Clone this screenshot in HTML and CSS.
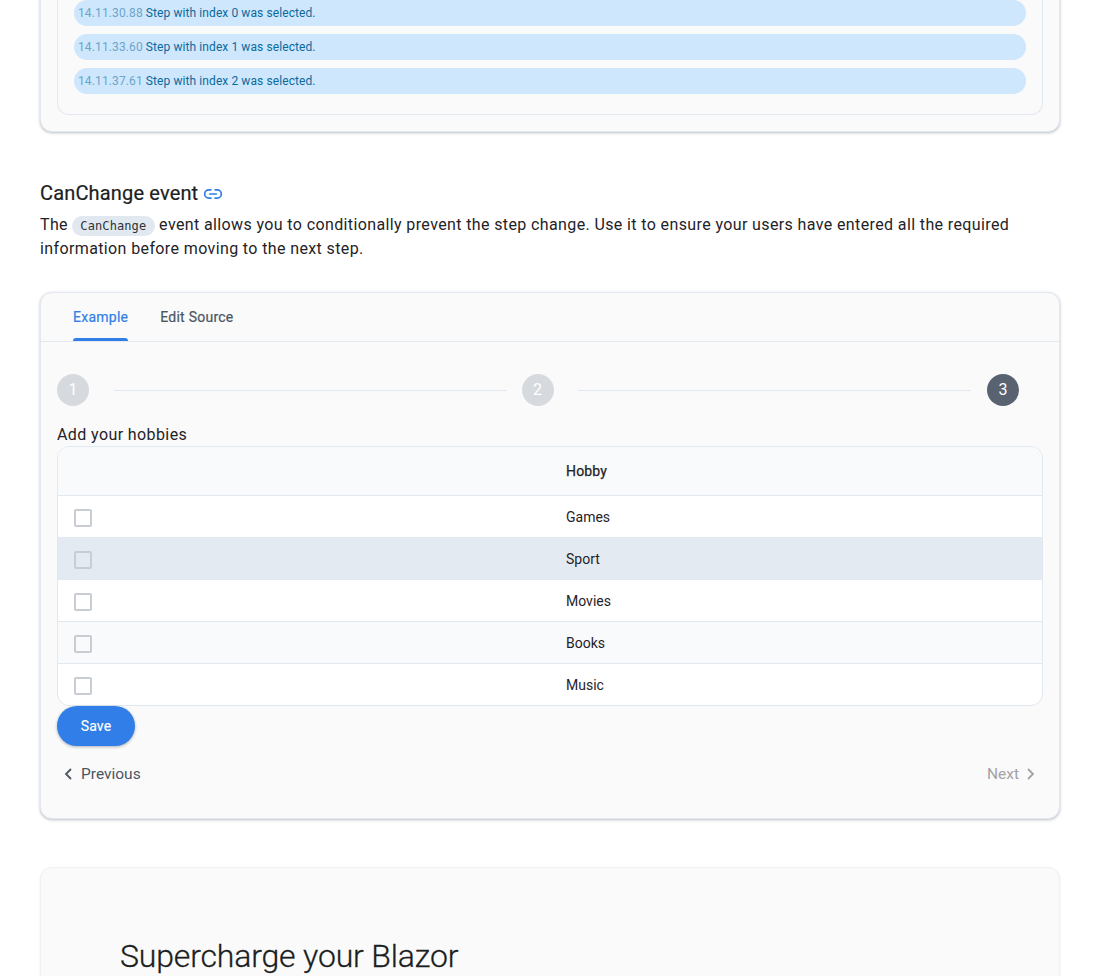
FILE: index.html
```html
<!DOCTYPE html>
<html lang="en">
<head>
<meta charset="utf-8">
<title>CanChange event</title>
<link rel="stylesheet" href="styles.css">
</head>
<body>
<main class="page">
  <section class="card log-card">
    <div class="log-panel">
      <div class="log-row"><span class="log-time">14.11.30.88</span> Step with index 0 was selected.</div>
      <div class="log-row"><span class="log-time">14.11.33.60</span> Step with index 1 was selected.</div>
      <div class="log-row"><span class="log-time">14.11.37.61</span> Step with index 2 was selected.</div>
    </div>
  </section>

  <h2 class="heading">CanChange event
    <svg class="link-icon" viewBox="0 0 24 24" width="20" height="20" fill="none" stroke="currentColor" stroke-width="2" stroke-linecap="round"><path d="M9.5 7H7a5 5 0 0 0 0 10h2.500M14.500 7H17a5 5 0 0 1 0 10h-2.500M8 12h8"/></svg>
  </h2>
  <p class="lead">The <code class="pill">CanChange</code> event allows you to conditionally prevent the step change. Use it to ensure your users have entered all the required information before moving to the next step.</p>

  <section class="card example-card">
    <div class="tabs">
      <div class="tab tab-active">Example</div>
      <div class="tab">Edit Source</div>
    </div>
    <div class="example-body">
      <div class="steps">
        <div class="step"><span class="step-dot">1</span><span class="step-line"></span></div>
        <div class="step"><span class="step-dot">2</span><span class="step-line"></span></div>
        <div class="step step-last"><span class="step-dot step-dot-active">3</span></div>
      </div>
      <div class="step-title">Add your hobbies</div>
      <div class="table">
        <div class="tr th"><div class="td"></div><div class="td">Hobby</div></div>
        <div class="tr"><div class="td"><span class="check"></span></div><div class="td">Games</div></div>
        <div class="tr tr-selected"><div class="td"><span class="check"></span></div><div class="td">Sport</div></div>
        <div class="tr"><div class="td"><span class="check"></span></div><div class="td">Movies</div></div>
        <div class="tr tr-striped"><div class="td"><span class="check"></span></div><div class="td">Books</div></div>
        <div class="tr"><div class="td"><span class="check"></span></div><div class="td">Music</div></div>
      </div>
      <button class="save" type="button">Save</button>
      <div class="nav">
        <div class="nav-btn">
          <svg class="chev" viewBox="0 0 10 14" width="10" height="14" fill="none" stroke="currentColor" stroke-width="1.800"><path d="M8 2 3 7l5 5"/></svg>
          Previous
        </div>
        <div class="nav-btn nav-disabled">
          Next
          <svg class="chev" viewBox="0 0 10 14" width="10" height="14" fill="none" stroke="currentColor" stroke-width="1.800"><path d="m2 2 5 5-5 5"/></svg>
        </div>
      </div>
    </div>
  </section>

  <section class="card promo-card">
    <h1 class="promo-title">Supercharge your Blazor</h1>
  </section>
</main>
</body>
</html>
```

FILE: styles.css
```css
* { box-sizing: border-box; }
html, body { margin: 0; height: 976px; overflow: hidden; background: #fff; }
body { font-family: Roboto, "Liberation Sans", sans-serif; color: #1f2328; }
.page { padding: 0 39px 0 40px; margin-top: -25px; }
.card {
  background: #fafafa;
  border-radius: 12px;
  border: 1px solid #e2e8f0;
  box-shadow: 0 1px 3px rgba(30, 41, 59, .3);
}
.log-card { padding: 0 16px 16px; }
.log-panel {
  border: 1px solid #e2e8f0;
  border-top: 0;
  border-radius: 0 0 12px 12px;
  padding: 24px 16px 20px;
  display: flex;
  flex-direction: column;
  gap: 8px;
}
.log-row {
  height: 26px;
  line-height: 27px;
  padding: 0 4px;
  border-radius: 13px;
  background: #cfe7fc;
  color: #0a6a9e;
  font-size: 12px;
  letter-spacing: .09px;
}
.log-time { color: #6aa5cb; letter-spacing: .12px; }
.heading {
  margin: 48px 0 0;
  font-size: 20px;
  font-weight: 400;
  letter-spacing: .16px;
  -webkit-text-stroke: .2px currentColor;
  line-height: 26px;
  height: 26px;
  display: flex;
  align-items: center;
  gap: 5px;
  color: #1b1e22;
}
.link-icon { color: #317ee8; margin-top: 2px; }
.lead {
  margin: 7px 0 0;
  font-size: 16px;
  line-height: 24px;
  letter-spacing: .38px;
  color: #1f2328;
}
.pill {
  display: inline-block;
  height: 20px;
  line-height: 20px;
  padding: 0 8.5px 0 8px;
  border-radius: 10px;
  background: #e2e8f0;
  font-family: "DejaVu Sans Mono", monospace;
  font-size: 12px;
  letter-spacing: .1px;
  color: #2c333b;
}
.example-card { margin-top: 31px; height: 527px; }
.tabs {
  display: flex;
  gap: 32px;
  padding: 0 32px;
  height: 49px;
  border-bottom: 1px solid #e2e8f0;
}
.tab {
  height: 48px;
  line-height: 48px;
  font-size: 14px;
  font-weight: 400;
  letter-spacing: .25px;
  -webkit-text-stroke: .2px currentColor;
  color: #4b5563;
  position: relative;
}
.tab-active { color: #317ee8; }
.tab-active::after {
  content: "";
  position: absolute;
  left: 0;
  right: 0;
  bottom: 0;
  height: 3px;
  border-radius: 3px 3px 0 0;
  background: #317ee8;
}
.example-body { padding: 32px 16px 0; }
.steps { display: flex; height: 32px; }
.step { flex: 0 0 464.6px; display: flex; align-items: center; }
.step-last { flex: 0 0 56px; margin-left: auto; }
.step-dot {
  flex: none;
  width: 32px;
  height: 32px;
  border-radius: 50%;
  background: #d6dade;
  color: #fff;
  font-size: 16px;
  line-height: 32px;
  text-align: center;
}
.step-dot-active { background: #596270; }
.step-line {
  flex: none;
  width: 393px;
  height: 1px;
  margin-left: 24.6px;
  background: #e2e8f0;
}
.step-title {
  margin-top: 17px;
  height: 23px;
  line-height: 23px;
  font-size: 16px;
  letter-spacing: .4px;
  color: #1f2328;
}
.table {
  border: 1px solid #e2e8f0;
  border-radius: 12px;
  overflow: hidden;
  background: #fff;
}
.tr {
  display: grid;
  grid-template-columns: 50% 50%;
  height: 42px;
  align-items: center;
  font-size: 14px;
  color: #1f2328;
  border-bottom: 1px solid #e2e8f0;
}
.tr:last-child { border-bottom: 0; height: 41px; }
.th { height: 49px; background: #f8fafc; font-weight: 400; letter-spacing: .15px; -webkit-text-stroke: .25px currentColor; }
.tr-selected { background: #e4eaf2; }
.tr-striped { background: #f8fafc; }
.td { padding: 0 16px; display: flex; align-items: center; }
.check {
  width: 18px;
  height: 18px;
  margin-top: 2px;
  border: 2px solid #c8cdd3;
  border-radius: 2px;
}
.save {
  display: block;
  width: 78px;
  height: 40px;
  padding: 0;
  border: 0;
  border-radius: 20px;
  background: #317ee8;
  color: #fff;
  font-family: inherit;
  font-size: 14px;
  font-weight: 400;
  letter-spacing: .2px;
  -webkit-text-stroke: .15px currentColor;
  box-shadow: 0 1px 3px rgba(30, 41, 59, .35);
}
.nav {
  display: flex;
  justify-content: space-between;
  margin-top: 8px;
  height: 40px;
}
.nav-btn {
  display: flex;
  align-items: center;
  gap: 8px;
  padding: 0 7px 0 6px;
  font-size: 15.5px;
  color: #4b5563;
}
.nav-disabled { color: #a3a3a6; gap: 7px; }
.promo-card { margin-top: 48px; height: 300px; padding: 67px 79px 0; border-color: #eef1f5; box-shadow: 0 1px 2px rgba(30, 41, 59, .1); }
.promo-title {
  margin: 0;
  font-size: 32px;
  font-weight: 300;
  letter-spacing: -.17px;
  -webkit-text-stroke: .3px currentColor;
  line-height: 42px;
  color: #1b1e22;
}
```
